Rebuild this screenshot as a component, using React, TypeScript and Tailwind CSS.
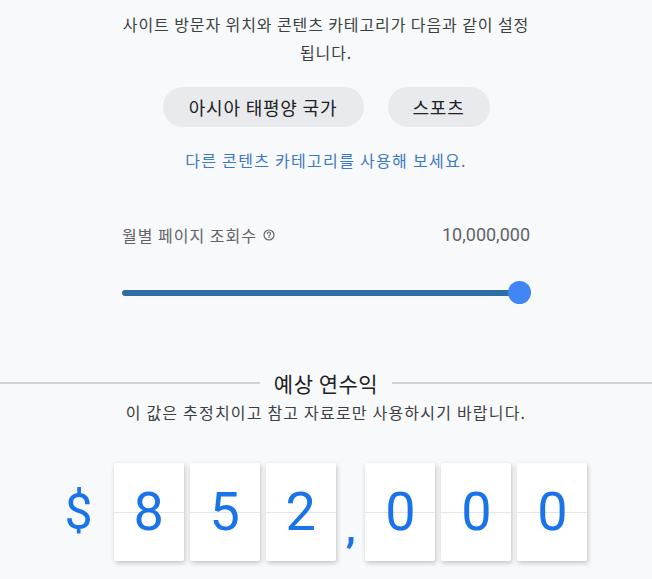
import React from "react";

const digits = ["8", "5", "2", ",", "0", "0", "0"];

function DigitCard({ value }: { value: string }) {
  return (
    <div className="relative flex h-[98px] w-[70px] items-center justify-center rounded-[2px] bg-white shadow-[1px_2px_5px_rgba(0,0,0,0.22)]">
      <div className="absolute left-0 right-0 top-1/2 h-px bg-[#e6e6e6]" />
      <span className="relative text-[54px] leading-none text-[#1a73e8] [font-family:Roboto,'Open_Sans',sans-serif]">{value}</span>
    </div>
  );
}

export default function App() {
  return (
    <div className="h-[579px] w-full overflow-hidden bg-[#f8f9fa] text-[#3c4043] [font-family:'Noto_Sans_CJK_KR','Noto_Sans',sans-serif]">
      <p className="mx-auto w-[430px] break-keep pt-[10px] text-center text-[16px] leading-[28px] tracking-[0.9px]">
        사이트 방문자 위치와 콘텐츠 카테고리가 다음과 같이 설정 됩니다.
      </p>

      <div className="mt-[21px] flex justify-center gap-[24px]">
        <span className="flex h-[40px] w-[201px] items-center justify-center rounded-full bg-[#e8eaed] text-[18px] tracking-[0.8px] text-[#202124]">아시아 태평양 국가</span>
        <span className="flex h-[40px] w-[102px] items-center justify-center rounded-full bg-[#e8eaed] text-[18px] tracking-[0.8px] text-[#202124]">스포츠</span>
      </div>

      <p className="mt-[21px] text-center text-[16px] leading-[24px] tracking-[1.3px] text-[#3b78c8]">다른 콘텐츠 카테고리를 사용해 보세요.</p>

      <div className="mx-auto mt-[51px] w-[408px]">
        <div className="flex items-center justify-between leading-[24px]">
          <span className="flex items-center gap-[6px] text-[16px] tracking-[1px] text-[#5f6368]">
            월별 페이지 조회수
            <svg width="12" height="12" viewBox="0 0 12 12" className="text-[#5f6368]">
              <circle cx="6" cy="6" r="5" fill="none" stroke="currentColor" strokeWidth="1.2" />
              <path d="M4.4 4.7a1.6 1.6 0 1 1 2.3 1.4c-.5.3-.7.5-.7 1.1" fill="none" stroke="currentColor" strokeWidth="1.1" strokeLinecap="round" />
              <circle cx="6" cy="8.6" r="0.7" fill="currentColor" />
            </svg>
          </span>
          <span className="text-[18px] text-[#5f6368] [font-family:Roboto,sans-serif]">10,000,000</span>
        </div>

        <div className="relative mt-[34px] h-[24px]">
          <div className="absolute left-0 right-[4px] top-[9px] h-[6px] rounded-full bg-[#2e6da6]" />
          <div className="absolute right-[-1px] top-0 h-[23px] w-[23px] rounded-full bg-[#4285f4]" />
        </div>
      </div>

      <div className="mt-[64px] flex items-center gap-[14px]">
        <div className="h-[2px] flex-1 bg-[#d2d2d2]" />
        <span className="text-[21px] leading-[28px] tracking-[0.5px] text-[#202124]">예상 연수익</span>
        <div className="h-[2px] flex-1 bg-[#d2d2d2]" />
      </div>

      <p className="mt-[4px] text-center text-[16px] leading-[22px] tracking-[1.2px]">이 값은 추정치이고 참고 자료로만 사용하시기 바랍니다.</p>

      <div className="mt-[40px] flex items-center justify-center">
        <span className="mr-[21px] text-[50px] leading-none text-[#1a73e8] [font-family:Roboto,sans-serif]">$</span>
        <div className="flex items-center gap-[6px]">
          {digits.map((d, i) =>
            d === "," ? (
              <span key={i} className="mx-[4px] self-end pb-[12px] text-[40px] font-bold leading-none text-[#1a73e8] [font-family:Roboto,sans-serif]">,</span>
            ) : (
              <DigitCard key={i} value={d} />
            )
          )}
        </div>
      </div>
    </div>
  );
}
